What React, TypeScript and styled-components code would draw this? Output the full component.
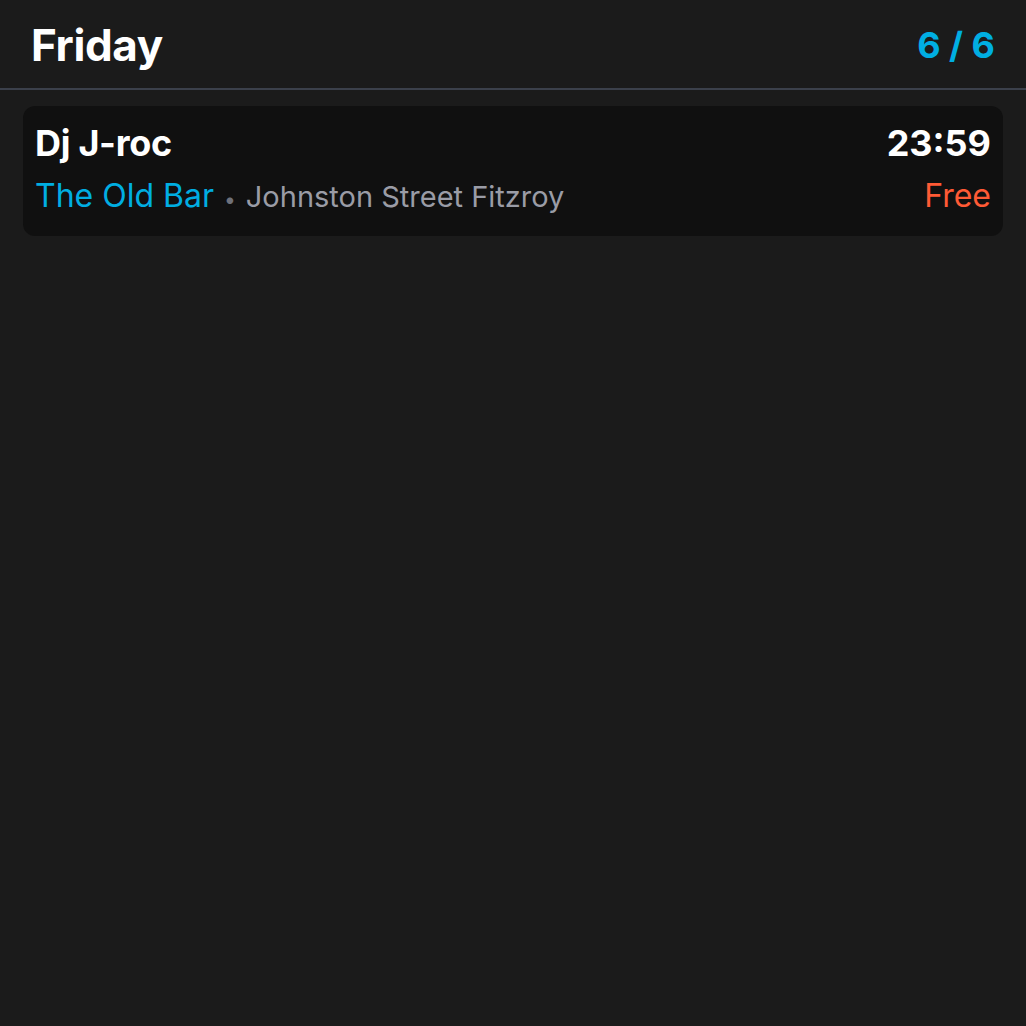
import React from "react";
import styled, { createGlobalStyle } from "styled-components";

const Global = createGlobalStyle`
  html, body {
    margin: 0;
    padding: 0;
    background: #1b1b1b;
    font-family: Inter, "Noto Sans", sans-serif;
    -webkit-font-smoothing: antialiased;
  }
`;

const Page = styled.div`
  min-height: 1026px;
  background: #1b1b1b;
  display: flex;
  flex-direction: column;
`;

const Header = styled.header`
  display: flex;
  align-items: center;
  justify-content: space-between;
  height: 90px;
  box-sizing: border-box;
  padding: 2px 31px 0 31px;
  border-bottom: 2px solid #3b404b;
`;

const DayTitle = styled.h1`
  margin: 0;
  font-size: 44px;
  font-weight: 700;
  color: #ffffff;
  letter-spacing: -0.4px;
`;

const Counter = styled.span`
  font-size: 36px;
  font-weight: 700;
  color: #00aee2;
`;

const List = styled.div`
  display: flex;
  flex-direction: column;
  gap: 12px;
  padding: 16px 23px;
`;

const Card = styled.div`
  background: #101010;
  border-radius: 12px;
  padding: 16px 12px 17px 12px;
  display: flex;
  justify-content: space-between;
  align-items: stretch;
`;

const Column = styled.div<{ $align?: "start" | "end" }>`
  display: flex;
  flex-direction: column;
  align-items: ${(p) => (p.$align === "end" ? "flex-end" : "flex-start")};
  gap: 13px;
`;

const Artist = styled.div`
  font-size: 36px;
  font-weight: 700;
  color: #ffffff;
  line-height: 42px;
  letter-spacing: -0.3px;
`;

const Time = styled.div`
  font-size: 36px;
  font-weight: 700;
  color: #ffffff;
  line-height: 42px;
`;

const VenueLine = styled.div`
  display: flex;
  align-items: baseline;
  gap: 10px;
  line-height: 38px;
`;

const Venue = styled.span`
  font-size: 32px;
  color: #00aee2;
`;

const Dot = styled.span`
  font-size: 21px;
  color: #6e717a;
`;

const Address = styled.span`
  font-size: 29px;
  color: #9a9ca6;
`;

const Price = styled.div`
  font-size: 32px;
  color: #ff5a35;
  line-height: 38px;
`;

export default function App() {
  return (
    <Page>
      <Global />
      <Header>
        <DayTitle>Friday</DayTitle>
        <Counter>6 / 6</Counter>
      </Header>
      <List>
        <Card>
          <Column>
            <Artist>Dj J-roc</Artist>
            <VenueLine>
              <Venue>The Old Bar</Venue>
              <Dot>•</Dot>
              <Address>Johnston Street Fitzroy</Address>
            </VenueLine>
          </Column>
          <Column $align="end">
            <Time>23:59</Time>
            <Price>Free</Price>
          </Column>
        </Card>
      </List>
    </Page>
  );
}
